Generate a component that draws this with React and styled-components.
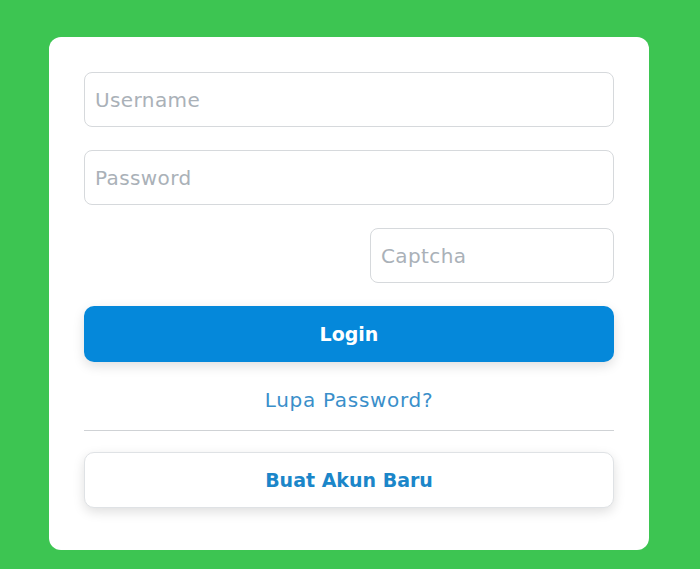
import styled, { createGlobalStyle } from 'styled-components';

const GlobalStyle = createGlobalStyle`
  html, body {
    margin: 0;
    padding: 0;
    background: #3dc552;
    font-family: "DejaVu Sans", "Noto Sans", sans-serif;
  }
`;

const Page = styled.div`
  display: flex;
  justify-content: center;
  padding: 37px 2px 20px 0;
  min-height: 569px;
  box-sizing: border-box;
`;

const Card = styled.form`
  width: 600px;
  box-sizing: border-box;
  background: #fff;
  border-radius: 12px;
  padding: 35px 35px 42px;
  display: flex;
  flex-direction: column;
`;

const Input = styled.input`
  box-sizing: border-box;
  width: ${(p) => p.$width || '100%'};
  height: 55px;
  padding: 0 10px;
  border: 1px solid #d6d9dc;
  border-radius: 8px;
  font-family: inherit;
  font-size: 20px;
  letter-spacing: 0.4px;
  color: #333;
  margin-bottom: 23px;
  align-self: ${(p) => (p.$right ? 'flex-end' : 'stretch')};
  outline: none;

  &::placeholder {
    color: #aab1b8;
  }
`;

const Button = styled.button`
  height: 56px;
  border-radius: 10px;
  font-family: inherit;
  font-weight: bold;
  font-size: 19px;
  cursor: pointer;
  border: ${(p) => (p.$primary ? 'none' : '1px solid #dfe2e5')};
  background: ${(p) => (p.$primary ? '#0588da' : '#fff')};
  color: ${(p) => (p.$primary ? '#fff' : '#1b86c9')};
  box-shadow: 0 4px 12px rgba(0, 0, 0, 0.13);
`;

const Forgot = styled.a`
  display: block;
  text-align: center;
  color: #3a8fca;
  font-size: 20px;
  letter-spacing: 0.7px;
  text-decoration: none;
  margin: 26px 0 18px;
`;

const Divider = styled.hr`
  border: none;
  border-top: 1px solid #cfd2d5;
  margin: 0 0 21px;
`;

export default function App() {
  return (
    <>
      <GlobalStyle />
      <Page>
        <Card onSubmit={(e) => e.preventDefault()}>
          <Input placeholder="Username" />
          <Input type="password" placeholder="Password" />
          <Input $right $width="244px" placeholder="Captcha" />
          <Button $primary type="submit">Login</Button>
          <Forgot href="#">Lupa Password?</Forgot>
          <Divider />
          <Button type="button">Buat Akun Baru</Button>
        </Card>
      </Page>
    </>
  );
}
